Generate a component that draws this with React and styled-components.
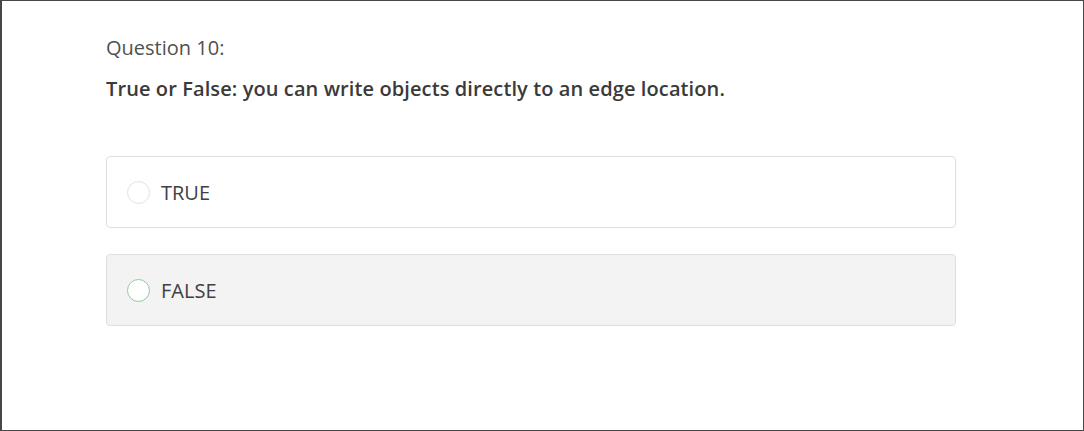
import React, { useState } from "react";
import styled, { createGlobalStyle } from "styled-components";

const GlobalStyle = createGlobalStyle`
  html, body {
    margin: 0;
    padding: 0;
    background: #ffffff;
  }
  * {
    box-sizing: border-box;
  }
`;

const options = [
  { id: "true", label: "TRUE" },
  { id: "false", label: "FALSE" },
];

function App() {
  const [hovered] = useState("false");

  return (
    <>
      <GlobalStyle />
      <Frame>
        <Content>
          <QuestionNumber>Question 10:</QuestionNumber>
          <QuestionText>
            True or False: you can write objects directly to an edge location.
          </QuestionText>
          <OptionList>
            {options.map((opt) => (
              <Option key={opt.id} $active={hovered === opt.id}>
                <Radio $active={hovered === opt.id} />
                <OptionLabel>{opt.label}</OptionLabel>
              </Option>
            ))}
          </OptionList>
        </Content>
      </Frame>
    </>
  );
}

export default App;

const Frame = styled.div`
  width: 1084px;
  height: 431px;
  border: 1px solid #474747;
  border-left-width: 2px;
  background: #fff;
  font-family: "Open Sans", "Liberation Sans", sans-serif;
`;

const Content = styled.div`
  width: 850px;
  margin-left: 104px;
  padding-top: 33px;
  display: flex;
  flex-direction: column;
`;

const QuestionNumber = styled.div`
  font-size: 20px;
  line-height: 28px;
  color: #505050;
  font-weight: 400;
`;

const QuestionText = styled.div`
  margin-top: 13px;
  font-size: 20px;
  line-height: 28px;
  font-weight: 600;
  letter-spacing: 0.1px;
  color: #3a3a3a;
`;

const OptionList = styled.div`
  margin-top: 53px;
  display: flex;
  flex-direction: column;
  gap: 26px;
`;

const Option = styled.div`
  height: 72px;
  display: flex;
  align-items: center;
  padding-left: 20px;
  border: 1px solid #dedede;
  border-radius: 4px;
  background: ${(p) => (p.$active ? "#f3f3f3" : "#ffffff")};
`;

const Radio = styled.span`
  width: 23px;
  height: 23px;
  border-radius: 50%;
  border: 1px solid ${(p) => (p.$active ? "#86cf92" : "#e2e2e2")};
  background: #fff;
  flex-shrink: 0;
`;

const OptionLabel = styled.span`
  margin-left: 11px;
  font-size: 20px;
  color: #404040;
`;
